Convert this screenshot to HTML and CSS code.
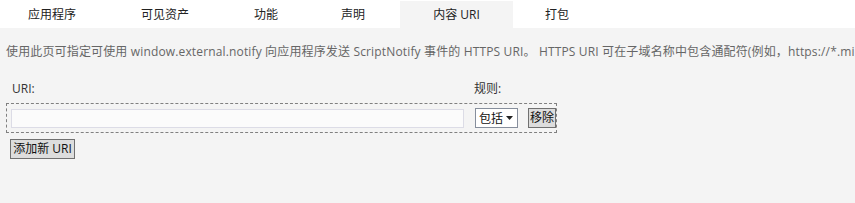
FILE: index.html
```html
<!DOCTYPE html>
<html lang="zh-CN">
<head>
<meta charset="UTF-8">
<meta name="viewport" content="width=device-width, initial-scale=1.0">
<title>内容 URI</title>
<link rel="stylesheet" href="styles.css">
</head>
<body>
<div class="tabs">
  <div class="tab tab-app">应用程序</div>
  <div class="tab tab-assets">可见资产</div>
  <div class="tab tab-caps">功能</div>
  <div class="tab tab-decl">声明</div>
  <div class="tab tab-uri active">内容 URI</div>
  <div class="tab tab-pack">打包</div>
</div>
<p class="desc">使用此页可指定可使用 window.external.notify 向应用程序发送 ScriptNotify 事件的 HTTPS URI。 HTTPS URI 可在子域名称中包含通配符(例如，https://*.microsoft.com)。</p>
<div class="labels">
  <span class="label-uri">URI:</span>
  <span class="label-rule">规则:</span>
</div>
<div class="uri-row">
  <input class="uri-input" type="text">
  <div class="rule">
    <span>包括</span>
    <svg width="7" height="4" viewBox="0 0 7 4"><path d="M0 0h7L3.5 4z" fill="#222"/></svg>
  </div>
  <button class="btn btn-remove">移除</button>
</div>
<button class="btn btn-add">添加新 URI</button>
</body>
</html>
```

FILE: styles.css
```css
body {
  margin: 0;
  background-color: #f4f4f4;
  font-family: 'Open Sans', 'Noto Sans CJK SC', sans-serif;
  font-size: 12px;
  color: #333;
  overflow: hidden;
}
.tabs {
  display: flex;
  height: 28px;
  background-color: #fff;
}
.tab {
  line-height: 28px;
  padding-top: 1px;
  height: 27px;
  text-align: center;
  color: #222;
}
.tab-app { width: 104px; }
.tab-assets { width: 122px; }
.tab-caps { width: 80px; }
.tab-decl { width: 94px; }
.tab-uri { width: 113px; }
.tab-pack { width: 88px; }
.tab.active {
  margin-top: 1px;
  padding-top: 0;
  background-color: #f4f4f4;
}
.desc {
  margin: 16px 0 0;
  padding: 0 6px;
  line-height: 16px;
  white-space: nowrap;
  overflow: hidden;
  letter-spacing: 0.15px;
  color: #666;
}
.labels {
  display: flex;
  margin-top: 21px;
  padding-left: 12px;
  line-height: 16px;
  color: #333;
}
.label-uri {
  width: 462px;
}
.uri-row {
  display: flex;
  align-items: center;
  box-sizing: border-box;
  width: 551px;
  height: 30px;
  margin: 6px 0 0 6px;
  padding-left: 4px;
  border: 1px dashed #808080;
}
.uri-input {
  box-sizing: border-box;
  width: 453px;
  height: 19px;
  margin: 1px 0 0;
  padding: 0 3px;
  border: 1px solid #dcdce6;
  background-color: #fbfbfb;
  outline: none;
}
.rule {
  display: flex;
  align-items: center;
  justify-content: space-between;
  box-sizing: border-box;
  width: 43px;
  height: 20px;
  margin-left: 11px;
  padding: 0 4px 0 3px;
  border: 1px solid #868e9c;
  background-color: #fff;
  color: #111;
}
.btn {
  box-sizing: border-box;
  height: 20px;
  padding: 0;
  border: 1px solid #707070;
  border-radius: 0;
  background-color: #dddddd;
  font-family: inherit;
  font-size: 12px;
  color: #111;
  line-height: 16px;
  white-space: nowrap;
}
.btn-remove {
  flex-shrink: 0;
  width: 28px;
  margin-left: 10px;
}
.btn-add {
  display: block;
  width: 65px;
  margin: 6px 0 0 10px;
}
```
